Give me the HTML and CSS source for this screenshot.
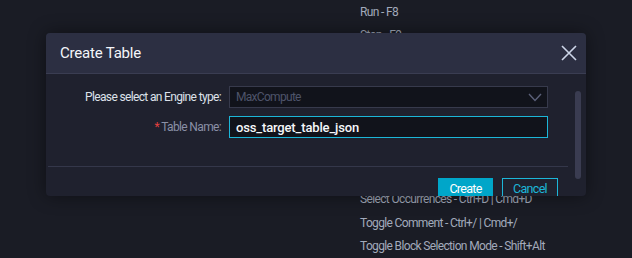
FILE: index.html
```html
<!DOCTYPE html>
<html>
<head>
<meta charset="utf-8">
<link rel="stylesheet" href="styles.css">
</head>
<body>
<ul class="shortcuts">
  <li>Run - F8</li>
  <li>Stop - F9</li>
  <li>Format - Ctrl+Shift+F</li>
  <li>Save - Ctrl+S | Cmd+S</li>
  <li>Find - Ctrl+F | Cmd+F</li>
  <li>Replace - Ctrl+H | Cmd+H</li>
  <li>Undo - Ctrl+Z | Cmd+Z</li>
  <li>Redo - Ctrl+Y | Cmd+Y</li>
  <li>Select Occurrences - Ctrl+D | Cmd+D</li>
  <li>Toggle Comment - Ctrl+/ | Cmd+/</li>
  <li>Toggle Block Selection Mode - Shift+Alt</li>
</ul>

<div class="dialog">
  <div class="dialog-header">
    <span class="dialog-title">Create Table</span>
    <svg class="close" width="16" height="16" viewBox="0 0 16 16">
      <path d="M1 1 L15 15 M15 1 L1 15" stroke="#cdd6e8" stroke-width="1.6" fill="none"/>
    </svg>
  </div>
  <div class="dialog-body">
    <div class="scroll-content">
      <div class="form">
        <div class="row">
          <label class="label">Please select an Engine type:</label>
          <div class="select">
            <span class="select-value">MaxCompute</span>
            <svg width="14" height="9" viewBox="0 0 14 9"><path d="M1 1 L7 7.5 L13 1" stroke="#5b6079" stroke-width="1.4" fill="none"/></svg>
          </div>
        </div>
        <div class="row">
          <label class="label label-dim"><span class="req">*</span> Table Name:</label>
          <div class="input">oss_target_table_json</div>
        </div>
      </div>
      <div class="footer">
        <button class="btn btn-primary">Create</button>
        <button class="btn btn-ghost">Cancel</button>
      </div>
    </div>
    <div class="scrollbar"><div class="thumb"></div></div>
  </div>
</div>
</body>
</html>
```

FILE: styles.css
```css
html, body {
  margin: 0;
  padding: 0;
  background: #1a1c25;
  font-family: Roboto, "Liberation Sans", sans-serif;
  width: 632px;
  height: 258px;
  overflow: hidden;
}

.shortcuts {
  list-style: none;
  margin: 0;
  padding: 1px 0 0 360px;
  font-size: 12px;
  letter-spacing: -0.65px;
  line-height: 23.4px;
  color: #a2aabb;
}

.dialog {
  position: absolute;
  left: 46px;
  top: 33px;
  width: 540px;
  height: 163px;
  background: #1f212e;
  border-radius: 4px;
  overflow: hidden;
  box-shadow: 0 0 18px rgba(0, 0, 0, 0.45);
  display: flex;
  flex-direction: column;
}

.dialog-header {
  height: 40px;
  flex: none;
  background: #2c2f42;
  border-bottom: 1px solid #3a3d52;
  display: flex;
  align-items: center;
  justify-content: space-between;
  padding: 0 9px 0 14px;
}

.dialog-title {
  color: #f4f6fa;
  font-size: 15px;
  letter-spacing: -0.2px;
}

.close {
  display: block;
  margin-top: -1px;
}

.dialog-body {
  flex: 1;
  display: flex;
  min-height: 0;
}

.scroll-content {
  flex: 1;
  min-width: 0;
}

.form {
  padding: 12px 0 0;
  height: 80px;
  margin: 0 7px 0 2px;
  border-bottom: 1px solid #34374a;
  display: flex;
  flex-direction: column;
  gap: 8px;
}

.row {
  display: flex;
  align-items: center;
}

.label {
  width: 173px;
  padding-right: 8px;
  text-align: right;
  font-size: 12px;
  letter-spacing: -0.65px;
  color: #dde1ea;
}

.label-dim {
  color: #8a90a6;
}

.req {
  color: #e5403f;
}

.select, .input {
  width: 319px;
  height: 22px;
  box-sizing: border-box;
  background: #11131b;
  display: flex;
  align-items: center;
  padding: 0 5px 0 6px;
}

.select {
  border: 1px solid #373a4c;
  justify-content: space-between;
}

.select-value {
  font-size: 12px;
  letter-spacing: -0.7px;
  color: #4e546a;
}

.input {
  border: 1px solid #1cb6d8;
  font-size: 13px;
  letter-spacing: -0.15px;
  color: #f5f7fa;
  font-weight: 500;
}

.footer {
  display: flex;
  justify-content: flex-end;
  gap: 9px;
  padding: 11px 17px 0 0;
}

.btn {
  height: 21px;
  font-family: Roboto, "Liberation Sans", sans-serif;
  font-size: 12.5px;
  letter-spacing: -0.7px;
  border-radius: 0;
  padding: 0;
  margin: 0;
}

.btn-primary {
  width: 55px;
  background: #00a6c9;
  color: #ffffff;
  border: none;
}

.btn-ghost {
  width: 56px;
  background: transparent;
  color: #1cb6d8;
  border: 1px solid #1cb6d8;
}

.scrollbar {
  width: 6px;
  flex: none;
  margin-right: 5px;
  padding-top: 17px;
}

.thumb {
  height: 88px;
  border-radius: 3px;
  background: #3a3c51;
}
```
